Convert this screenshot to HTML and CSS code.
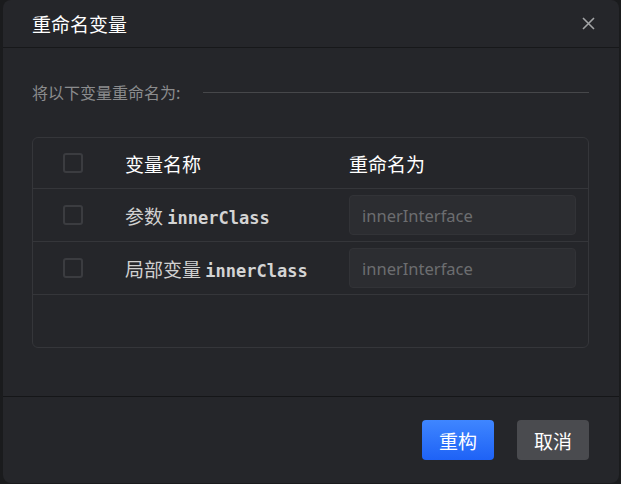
FILE: index.html
```html
<!DOCTYPE html>
<html lang="zh-CN">
<head>
    <meta charset="UTF-8">
    <meta name="viewport" content="width=device-width, initial-scale=1.0">
    <title>重命名变量</title>
    <link rel="stylesheet" href="styles.css">
</head>
<body>
    <div class="dialog">
        <header class="dialog-header">
            <h1 class="dialog-title">重命名变量</h1>
            <button class="close-button" aria-label="关闭">
                <svg width="13" height="13" viewBox="0 0 13 13">
                    <path d="M1 1 L12 12 M12 1 L1 12" stroke="#a3a4a6" stroke-width="1.6" fill="none"/>
                </svg>
            </button>
        </header>

        <div class="dialog-body">
            <div class="section-label">
                <span>将以下变量重命名为:</span>
                <div class="section-rule"></div>
            </div>

            <div class="var-table">
                <div class="var-row var-head">
                    <div class="cell-check"><span class="checkbox"></span></div>
                    <div class="cell-name">变量名称</div>
                    <div class="cell-new">重命名为</div>
                </div>
                <div class="var-row">
                    <div class="cell-check"><span class="checkbox"></span></div>
                    <div class="cell-name">参数 <code>innerClass</code></div>
                    <div class="cell-new"><input class="rename-input" type="text" placeholder="innerInterface"></div>
                </div>
                <div class="var-row">
                    <div class="cell-check"><span class="checkbox"></span></div>
                    <div class="cell-name">局部变量 <code>innerClass</code></div>
                    <div class="cell-new"><input class="rename-input" type="text" placeholder="innerInterface"></div>
                </div>
            </div>
        </div>

        <footer class="dialog-footer">
            <button class="btn btn-primary">重构</button>
            <button class="btn btn-cancel">取消</button>
        </footer>
    </div>
</body>
</html>
```

FILE: styles.css
```css
html, body {
    margin: 0;
    padding: 0;
    height: 484px;
    overflow: hidden;
}
body {
    background-color: #1a1b1d;
    font-family: "Noto Sans", "Noto Sans CJK SC", sans-serif;
    color: #d6d6d6;
}
.dialog {
    margin-left: 3px;
    width: 616px;
    height: 483px;
    background-color: #25262a;
    border-radius: 8px;
    display: flex;
    flex-direction: column;
    overflow: hidden;
}
.dialog-header {
    height: 47px;
    flex-shrink: 0;
    border-bottom: 1px solid #17181a;
    display: flex;
    align-items: center;
    justify-content: space-between;
    padding: 0 24px 0 29px;
}
.dialog-title {
    margin: 0;
    font-size: 19px;
    font-weight: normal;
    color: #ffffff;
    font-family: "Noto Sans CJK SC", sans-serif;
}
.close-button {
    background: transparent;
    border: none;
    padding: 0;
    width: 13px;
    height: 13px;
    display: flex;
    cursor: pointer;
}
.dialog-body {
    flex: 1;
    padding: 34px 30px 0 29px;
}
.section-label {
    display: flex;
    align-items: center;
    height: 20px;
    font-size: 16px;
    color: #8b8c8e;
    font-family: "Noto Sans CJK SC", sans-serif;
}
.section-rule {
    flex: 1;
    height: 1px;
    background-color: #46474a;
    margin-left: 23px;
}
.var-table {
    margin-top: 35px;
    height: 209px;
    border: 1px solid #35363a;
    border-radius: 6px;
}
.var-row {
    display: grid;
    grid-template-columns: 92px 224px 227px;
    align-items: center;
    height: 52px;
    border-bottom: 1px solid #35363a;
}
.var-head {
    height: 50px;
    color: #ffffff;
}
.cell-check {
    padding-left: 30px;
    display: flex;
}
.checkbox {
    width: 16px;
    height: 16px;
    border: 2px solid #3b3c40;
    border-radius: 3px;
}
.cell-name, .cell-new {
    font-size: 19px;
    font-family: "Noto Sans CJK SC", sans-serif;
}
.var-row .cell-name {
    color: #d0d0d0;
}
.var-head .cell-name, .var-head .cell-new {
    color: #ffffff;
}
code {
    font-family: "DejaVu Sans Mono", monospace;
    font-weight: bold;
    font-size: 17px;
    color: #d4d4d4;
}
.rename-input {
    box-sizing: border-box;
    width: 227px;
    height: 40px;
    background-color: #2c2d31;
    border: 1px solid #323337;
    border-radius: 4px;
    padding: 0 12px;
    font-family: "Noto Sans", sans-serif;
    font-size: 16.5px;
    color: #d0d0d0;
    outline: none;
}
.rename-input::placeholder {
    color: #6c6d70;
}
.dialog-footer {
    height: 87px;
    flex-shrink: 0;
    border-top: 1px solid #151618;
    display: flex;
    justify-content: flex-end;
    align-items: flex-start;
    gap: 23px;
    padding: 23px 30px 0 0;
    box-sizing: border-box;
}
.btn {
    width: 72px;
    height: 40px;
    border: none;
    border-radius: 4px;
    font-size: 19px;
    font-family: "Noto Sans CJK SC", sans-serif;
    color: #ffffff;
    cursor: pointer;
    padding: 0;
}
.btn-primary {
    background: linear-gradient(#3f86ff, #1e62f6);
}
.btn-cancel {
    background-color: #4a4b4f;
}
```
